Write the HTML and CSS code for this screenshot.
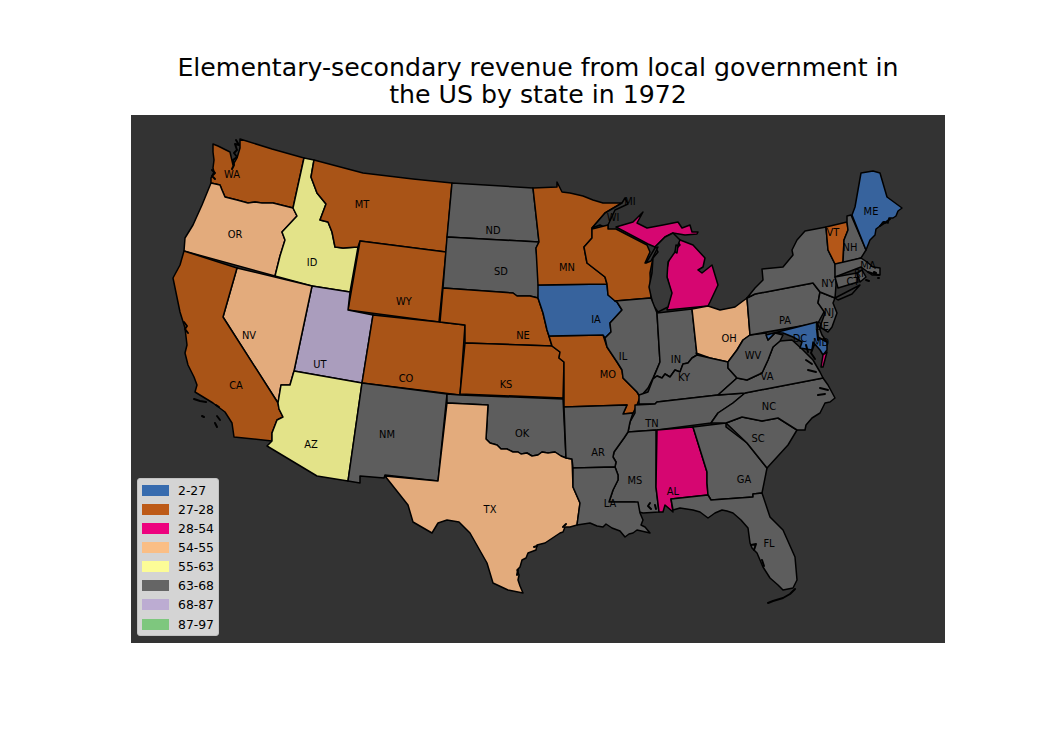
FILE: index.html
```html
<!DOCTYPE html>
<html lang="en">
<head>
<meta charset="utf-8">
<title>Elementary-secondary revenue from local government</title>
<link rel="stylesheet" href="styles.css">
</head>
<body>
<div class="figure">
  <h1 class="title">Elementary-secondary revenue from local government in<br>the US by state in 1972</h1>
  <div class="axes">
    <svg class="map" viewBox="131 115 814 528" width="814" height="528" xmlns="http://www.w3.org/2000/svg">
      <g class="states">
        <polygon class="brown" points="213,144 218,146 224,149 230,152 233,165 237,158 240,148 240,139 272,149 304,158 293,208 285,206 273,203 262,203 255,202 248,203 237,200 225,197 222,190 220,185 211,183 211,178 214,172 213,168 214,160 213,152"/>
        <polygon class="peach" points="211,183 220,185 222,190 225,197 237,200 248,203 255,202 262,203 273,203 285,206 293,208 297,216 282,232 285,240 280,256 275,276 184,251 185,238 193,225 202,205"/>
        <polygon class="yellow" points="304,158 314,160 311,177 317,193 326,204 320,220 328,222 332,232 335,247 343,248 358,247 350,292 312,286 275,276 280,256 285,240 282,232 297,216 293,208"/>
        <polygon class="brown" points="314,160 363,173 413,179 452,183 446,252 360,241 358,247 343,248 335,247 332,232 328,222 320,220 326,204 317,193 311,177"/>
        <polygon class="brown" points="360,241 446,252 439,322 348,310"/>
        <polygon class="purple" points="312,286 350,292 348,310 373,315 362,383 294,371"/>
        <polygon class="peach" points="237,268 312,286 294,371 290,385 281,385 278,403 223,317"/>
        <polygon class="brown" points="184,251 237,268 223,317 278,403 279,409 283,417 277,420 272,433 272,441 234,437 232,423 225,412 213,403 195,392 197,385 194,377 188,365 185,353 187,345 185,328 180,312 173,278 180,265"/>
        <polygon class="yellow" points="294,371 362,383 348,481 317,476 267,446 272,441 272,433 277,420 283,417 279,409 278,403 281,385 290,385"/>
        <polygon class="brown" points="373,315 439,322 465,325 460,395 362,383"/>
        <polygon class="gray" points="362,383 447,394 438,481 385,475 384,478 360,476 360,483 348,481"/>
        <polygon class="gray" points="447,394 460,395 563,399 566,458 561,456 555,452 548,453 542,452 538,455 532,456 527,453 521,454 518,452 513,452 507,449 501,449 497,445 490,443 486,439 488,405 447,403"/>
        <polygon class="peach" points="447,403 488,405 486,439 490,443 497,445 501,449 507,449 513,452 518,452 521,454 527,453 532,456 538,455 542,452 548,453 555,452 561,456 566,458 572,459 573,487 580,503 577,525 570,527 565,527 563,532 560,533 545,543 537,545 536,550 528,553 526,558 522,560 520,567 517,570 519,575 518,580 520,586 523,593 508,590 493,583 487,563 470,533 459,522 447,520 438,523 432,533 413,522 408,505 385,476 438,481"/>
        <polygon class="gray" points="452,183 533,188 539,242 447,237"/>
        <polygon class="gray" points="447,237 539,242 536,248 540,285 538,298 530,296 517,296 513,293 443,288"/>
        <polygon class="brown" points="443,288 513,293 517,296 530,296 538,298 543,313 547,330 552,346 465,343 465,325 440,322"/>
        <polygon class="brown" points="465,343 552,346 560,352 559,358 564,362 563,398 460,394"/>
        <polygon class="brown" points="549,336 603,335 607,347 617,362 622,370 623,378 637,392 640,397 637,405 633,413 623,414 627,405 564,407 564,362 559,358 560,352 552,346"/>
        <polygon class="blue" points="538,285 607,284 608,295 617,302 622,310 610,323 611,332 605,338 603,335 549,336 547,330 543,313 538,298"/>
        <polygon class="brown" points="533,188 557,187 557,182 562,192 570,193 583,196 593,200 603,203 622,203 605,213 592,228 592,238 584,247 587,263 605,277 607,284 538,285 536,248 539,242"/>
        <polygon class="water" points="592,228 605,213 622,203 625,198 628,204 615,210 608,225 608,229 600,225"/>
        <polygon class="brown" points="592,229 608,225 608,229 616,229 647,245 650,252 645,263 653,258 650,273 651,298 615,301 608,295 607,284 605,277 587,263 584,247 592,238"/>
        <polygon class="pink" points="616,227 633,222 643,212 637,223 647,228 663,225 678,222 682,228 690,225 692,232 698,232 697,234 685,235 673,233 665,237 655,247 648,244"/>
        <polygon class="pink" points="675,238 693,245 705,258 703,267 698,270 702,273 712,265 718,285 710,302 708,306 667,310 671,293 666,273 670,255 680,245"/>
        <polygon class="water" points="652,273 649,287 653,305 658,312 668,307 672,293 667,277 668,262 675,252 680,240 673,233 665,237 655,247 658,252 653,258"/>
        <polygon class="water" points="646,263 655,248 658,247 651,261"/>
        <polygon class="water" points="676,245 678,246 677,253 675,252"/>
        <polygon class="gray" points="615,301 651,298 657,313 660,362 653,378 648,388 640,397 637,392 623,378 622,370 617,362 607,347 605,338 611,332 610,323 622,310 617,302"/>
        <polygon class="gray" points="657,313 692,309 697,355 692,358 688,363 683,364 680,372 675,370 670,377 665,374 662,378 657,376 653,379 660,362"/>
        <polygon class="peach" points="692,309 708,306 720,310 735,307 747,298 750,335 743,340 737,350 728,362 710,358 696,353 697,355"/>
        <polygon class="gray" points="639,395 648,392 653,379 657,376 662,378 665,374 670,377 675,370 680,372 683,364 688,363 692,358 697,355 710,358 728,362 728,368 737,378 718,395 657,402 655,404 639,404"/>
        <polygon class="gray" points="635,405 655,404 657,402 718,395 745,393 733,403 718,413 711,423 657,430 628,432 630,422 635,413"/>
        <polygon class="gray" points="628,432 656,430 656,487 659,512 643,513 639,512 635,502 609,502 613,490 618,480 618,475 615,467 616,462 613,457 614,452 619,445 624,438"/>
        <polygon class="gray" points="564,407 627,405 623,414 633,413 630,422 628,432 624,438 619,445 614,452 613,457 616,462 615,467 573,468 572,459 566,458"/>
        <polygon class="gray" points="573,468 615,467 618,475 618,480 613,490 609,502 638,502 640,513 643,520 641,525 645,527 650,533 637,530 633,533 629,534 625,537 620,531 612,528 606,524 603,527 597,526 590,523 577,525 580,503 573,487"/>
        <polygon class="pink" points="657,430 693,427 707,472 707,483 708,495 671,499 673,512 665,505 663,512 659,512 656,487"/>
        <polygon class="gray" points="693,427 726,423 726,427 747,443 767,468 762,493 753,494 753,497 711,500 708,495 707,483 707,472"/>
        <polygon class="gray" points="671,499 708,495 711,500 753,497 753,494 762,493 770,517 783,530 795,557 797,580 793,588 783,590 778,585 770,578 763,567 760,560 757,553 752,548 750,543 748,528 741,520 733,513 727,511 722,510 715,513 708,518 700,512 693,510 680,508 673,510"/>
        <polygon class="gray" points="726,423 742,417 762,421 778,418 797,430 788,445 767,468 747,443"/>
        <polygon class="gray" points="745,393 823,378 828,385 835,398 830,402 825,403 820,413 812,418 806,425 805,430 797,430 778,418 762,421 742,417 726,423 711,423 718,413 733,403"/>
        <polygon class="gray" points="718,395 737,378 747,380 762,373 768,360 773,347 780,341 792,340 803,350 813,360 820,372 823,378 745,393"/>
        <polygon class="gray" points="728,362 737,350 743,340 750,335 766,333 768,340 775,333 783,335 780,341 773,347 768,360 762,373 747,380 737,378 728,368"/>
        <polygon class="gray" points="747,298 755,294 813,283 820,292 818,303 825,310 818,323 750,335"/>
        <polygon class="blue" points="766,335 817,322 818,337 827,342 827,350 823,355 820,350 813,342 812,350 800,348 802,342 793,337 783,333 775,333 768,340"/>
        <polygon class="gray" points="817,322 822,335 827,342 818,337"/>
        <polygon class="pink" points="823,355 827,352 823,367 821,367"/>
        <polygon class="gray" points="820,292 835,298 833,303 837,313 832,327 828,332 820,327 825,313 818,303"/>
        <polygon class="gray" points="826,227 805,231 797,240 792,250 793,255 783,267 762,269 763,280 755,288 747,298 755,294 813,283 820,292 835,298 836,285 835,264 828,250"/>
        <polygon class="orange" points="826,227 847,222 848,230 844,240 843,263 835,264 828,250"/>
        <polygon class="gray" points="847,222 847,216 851,215 866,250 861,258 843,263 844,240 848,230"/>
        <polygon class="blue" points="852,215 855,207 861,173 873,171 880,173 887,197 902,208 898,211 896,216 893,218 889,218 888,223 883,222 880,226 876,229 875,235 870,240 866,250"/>
        <polygon class="gray" points="835,264 861,258 867,262 873,267 880,268 880,275 872,275 861,267 835,277"/>
        <polygon class="gray" points="835,277 857,273 858,282 838,288"/>
        <polygon class="gray" points="857,273 862,270 866,277 860,282"/>
        <polygon class="water" points="835,298 860,285 852,294 838,300"/>
      </g>
      <g class="details">
        <path d="M236,140 l3,5 l-4,-1 l2,6 l-3,3 l3,4 l-4,3 l1,5 l-2,4 M212,170 l3,3 l-3,3 l3,3"/>
        <path d="M184,322 l3,4 l-2,3 l3,4 M194,399 l6,2 l6,1 M216,405 l3,2 M202,416 l2,1 M217,416 l3,4 M215,423 l2,4"/>
        <path d="M814,345 l-3,8 l4,6 M806,360 l6,4 M808,370 l8,2 M806,345 l2,7 M817,330 l1,10 M820,388 l8,2 M818,395 l7,-1"/>
        <path d="M650,503 l-2,3 l3,3 M655,505 l1,4 M768,603 l5,-2 l10,-3 l7,-4 l5,-5"/>
        <path d="M880,226 l6,-4 l4,-3 M868,272 l6,2 l5,1 M866,280 l3,1 M751,545 l5,-1 l-2,6 M762,560 l2,6 M563,527 l3,-3 M518,570 l-1,5 M534,547 l3,-1 M874,272 l2,1 M878,278 l1,0 M884,222 l1,1"/>
      </g>
      <g class="labels">
        <text x="232" y="174">WA</text><text x="235" y="234">OR</text><text x="312" y="262">ID</text>
        <text x="362" y="204">MT</text><text x="404" y="301">WY</text><text x="249" y="335">NV</text>
        <text x="320" y="364">UT</text><text x="236" y="385">CA</text><text x="311" y="444">AZ</text>
        <text x="406" y="378">CO</text><text x="387" y="434">NM</text><text x="493" y="230">ND</text>
        <text x="501" y="271">SD</text><text x="523" y="335">NE</text><text x="506" y="384">KS</text>
        <text x="522" y="433">OK</text><text x="490" y="509">TX</text><text x="567" y="267">MN</text>
        <text x="596" y="319">IA</text><text x="608" y="374">MO</text><text x="598" y="452">AR</text>
        <text x="610" y="503">LA</text><text x="613" y="217">WI</text><text x="630" y="201">MI</text>
        <text x="623" y="356">IL</text><text x="676" y="359">IN</text><text x="729" y="338">OH</text>
        <text x="684" y="377">KY</text><text x="652" y="423">TN</text><text x="635" y="480">MS</text>
        <text x="673" y="491">AL</text><text x="744" y="479">GA</text><text x="769" y="543">FL</text>
        <text x="758" y="438">SC</text><text x="769" y="406">NC</text><text x="767" y="376">VA</text>
        <text x="753" y="355">WV</text><text x="785" y="320">PA</text><text x="828" y="283">NY</text>
        <text x="833" y="232">VT</text><text x="850" y="247">NH</text><text x="871" y="211">ME</text>
        <text x="868" y="265">MA</text><text x="859" y="273">RI</text><text x="853" y="281">CT</text>
        <text x="829" y="312">NJ</text><text x="822" y="326">DE</text><text x="821" y="342">MD</text>
        <text x="800" y="338">DC</text>
      </g>
    </svg>
    <ul class="legend">
      <li class="legend-row"><span class="swatch s-blue"></span>2-27</li>
      <li class="legend-row"><span class="swatch s-brown"></span>27-28</li>
      <li class="legend-row"><span class="swatch s-pink"></span>28-54</li>
      <li class="legend-row"><span class="swatch s-peach"></span>54-55</li>
      <li class="legend-row"><span class="swatch s-yellow"></span>55-63</li>
      <li class="legend-row"><span class="swatch s-gray"></span>63-68</li>
      <li class="legend-row"><span class="swatch s-purple"></span>68-87</li>
      <li class="legend-row"><span class="swatch s-green"></span>87-97</li>
    </ul>
  </div>
</div>
</body>
</html>
```
FILE: styles.css
```css
html, body { margin: 0; padding: 0; background: #fff; }
.figure { width: 1050px; height: 750px; box-sizing: border-box; padding: 54px 105px 0 131px; font-family: "DejaVu Sans", sans-serif; color: #000; overflow: hidden; }
.title { margin: 0 0 6px; height: 55px; font-size: 25.2px; font-weight: 400; line-height: 27px; text-align: center; white-space: nowrap; opacity: .99; }
.axes { position: relative; width: 814px; height: 528px; background: #333; }
.map { display: block; }
.states polygon { stroke: #000; stroke-width: 1.5; stroke-linejoin: round; }
.blue { fill: #37639d; }
.brown { fill: #a95417; }
.orange { fill: #b45718; }
.pink { fill: #d60671; }
.peach { fill: #e3ab7c; }
.yellow { fill: #e3e389; }
.gray { fill: #5d5d5d; }
.purple { fill: #aa9dbd; }
.water { fill: #383838; }
.details path { fill: none; stroke: #000; stroke-width: 2; stroke-linecap: round; stroke-linejoin: round; }
.labels { opacity: .99; }
.labels text { font-family: "DejaVu Sans", sans-serif; font-size: 9.9px; fill: #000; text-anchor: middle; dominant-baseline: central; }
.legend { position: absolute; left: 6px; top: 363px; width: 82px; height: 158px; box-sizing: border-box; margin: 0; padding: 1.5px 4px 0; list-style: none; background: #d6d6d6; border: 1px solid #c4c4c4; border-radius: 3px; display: flex; flex-direction: column; font-size: 12.4px; color: #000; opacity: .99; }
.legend-row { display: flex; align-items: center; gap: 9px; height: 19.15px; white-space: nowrap; }
.swatch { flex: none; width: 27px; height: 11px; }
.s-blue { background: #386cb0; }
.s-brown { background: #bf5b17; }
.s-pink { background: #f0027f; }
.s-peach { background: #fdc086; }
.s-yellow { background: #ffff99; }
.s-gray { background: #666666; }
.s-purple { background: #beaed4; }
.s-green { background: #7fc97f; }
```
